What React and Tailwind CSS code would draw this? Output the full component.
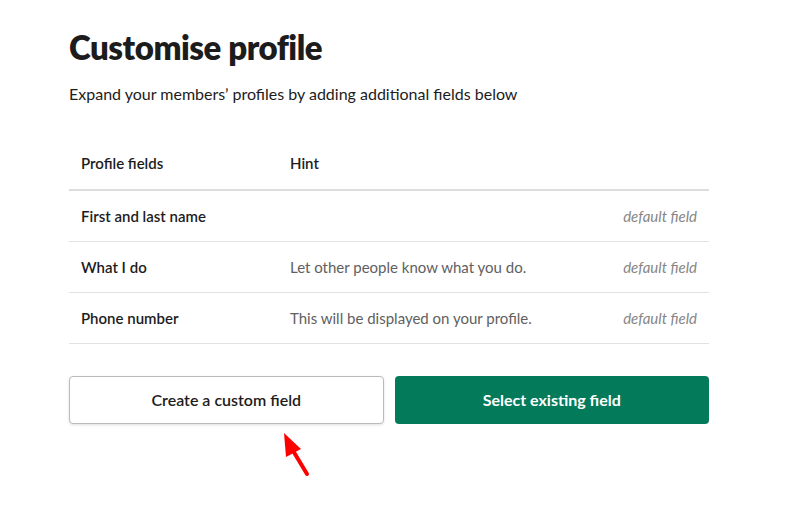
const rows = [
  { name: 'First and last name', hint: '' },
  { name: 'What I do', hint: 'Let other people know what you do.' },
  { name: 'Phone number', hint: 'This will be displayed on your profile.' },
];

const App = () => {
  return (
    <div className="min-h-[511px] bg-white font-['Lato',sans-serif] text-[#1d1c1d]">
      <div className="w-[640px] ml-[69px] pt-[27px]">
        <h1 className="text-[33px] leading-[40px] font-extrabold tracking-[-0.45px]">Customise profile</h1>
        <p className="mt-[16px] text-[16px] leading-[22px] text-[#1d1c1d]">
          Expand your members’ profiles by adding additional fields below
        </p>

        <div className="mt-[33px]">
          <div className="flex items-center h-[53px] px-[12px] border-b-2 border-[#dddddd] text-[15px] font-semibold">
            <div className="w-[209px]">Profile fields</div>
            <div>Hint</div>
          </div>
          {rows.map((row) => (
            <div
              key={row.name}
              className="flex items-center h-[51px] px-[12px] border-b border-[#e2e2e2] text-[15px]"
            >
              <div className="w-[209px] font-semibold">{row.name}</div>
              <div className="flex-1 text-[#616061]">{row.hint}</div>
              <div className="italic text-[#868686]">default field</div>
            </div>
          ))}
        </div>

        <div className="relative mt-[32px] grid grid-cols-2 gap-[11px]">
          <button className="h-[48px] rounded-[4px] border border-[#bbbbbb] bg-white text-[16px] font-semibold text-[#1d1c1d] shadow-[0_1px_3px_rgba(0,0,0,0.12)]">
            Create a custom field
          </button>
          <button className="h-[48px] rounded-[4px] bg-[#037a5a] text-[16px] font-bold text-white">
            Select existing field
          </button>
          <svg
            className="absolute left-[212px] top-[54px]"
            width="32"
            height="50"
            viewBox="0 0 32 50"
          >
            <polygon points="3,3 5,27 20,19" fill="#ff0000" />
            <line x1="11" y1="19" x2="26" y2="44" stroke="#ff0000" strokeWidth="4" strokeLinecap="round" />
          </svg>
        </div>
      </div>
    </div>
  );
};

export default App;
